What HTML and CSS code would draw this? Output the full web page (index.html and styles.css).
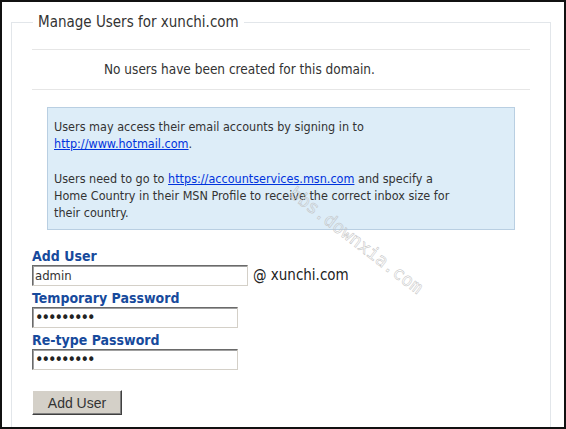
FILE: index.html
```html
<!DOCTYPE html>
<html lang="en">
<head>
  <meta charset="UTF-8" />
  <title>Manage Users</title>
  <link rel="stylesheet" href="styles.css">
</head>
<body>

<div class="page">
  <fieldset class="panel">
    <legend>Manage Users for xunchi.com</legend>

    <div class="status">No users have been created for this domain.</div>

    <div class="info">
      <p>Users may access their email accounts by signing in to<br>
        <a href="#">http://www.hotmail.com</a>.</p>
      <p>Users need to go to <a href="#">https://accountservices.msn.com</a> and specify a<br>
        Home Country in their MSN Profile to receive the correct inbox size for<br>
        their country.</p>
    </div>

    <form class="add-form" onsubmit="return false;">
      <label for="user">Add User</label>
      <div class="row">
        <input type="text" id="user" class="wide" value="admin">
        <span class="domain">@ xunchi.com</span>
      </div>
      <label for="pass1">Temporary Password</label>
      <div class="row">
        <input type="password" id="pass1" value="password1">
      </div>
      <label for="pass2">Re-type Password</label>
      <div class="row">
        <input type="password" id="pass2" value="password1">
      </div>
      <button type="submit">Add User</button>
    </form>
  </fieldset>

  <div class="watermark">bbs.downxia.com</div>
</div>

</body>
</html>
```

FILE: styles.css
```css
body {
  margin: 0;
  font-family: 'DejaVu Sans Condensed', 'DejaVu Sans', sans-serif;
  font-size: 13px;
  color: #333;
  background-color: #fff;
}
.page {
  position: relative;
  box-sizing: border-box;
  width: 566px;
  height: 429px;
  border: 2px solid #111;
  overflow: hidden;
}
.panel {
  margin: 10px 13px 0 9px;
  padding: 0;
  height: 460px;
  border: 1px solid #e2e6ea;
}
.panel legend {
  margin-left: 21px;
  padding: 0 5px;
  font-size: 15px;
  line-height: 20px;
  color: #333;
}
.status {
  margin: 17px 20px 0 20px;
  padding: 11px 0 11px 72px;
  font-size: 13.5px;
  line-height: 17px;
  border-top: 1px solid #e6e6e6;
  border-bottom: 1px solid #e6e6e6;
}
.info {
  margin: 17px 35px 0 35px;
  padding: 10px 10px 8px 6px;
  font-size: 12.5px;
  line-height: 17px;
  background-color: #ddedf8;
  border: 1px solid #b9cfe2;
}
.info p {
  margin: 0;
}
.info p + p {
  margin-top: 18px;
}
.info a {
  color: #0033dd;
}
.add-form {
  margin: 17px 20px 0 20px;
}
.add-form label {
  display: block;
  font-weight: bold;
  font-size: 14px;
  line-height: 18px;
  color: #174a9c;
}
.row {
  display: flex;
  align-items: baseline;
  gap: 5px;
  margin: 0 0 3px 0;
}
.row input {
  box-sizing: border-box;
  width: 206px;
  height: 21px;
  padding: 0 2px;
  font-family: 'DejaVu Sans Condensed', 'DejaVu Sans', sans-serif;
  font-size: 13px;
  color: #333;
  border: 1px solid;
  border-color: #6a6a6a #d4d0c8 #d4d0c8 #6a6a6a;
  box-shadow: inset 1px 1px 0 #a0a0a0;
  outline: none;
}
.row input[type="password"] {
  font-size: 16px;
  letter-spacing: -2px;
  color: #222;
}
.row input.wide {
  width: 216px;
}
.domain {
  font-size: 15px;
  color: #222;
}
button {
  margin-top: 17px;
  width: 90px;
  height: 25px;
  padding: 0;
  font-family: 'Liberation Sans', Arial, sans-serif;
  font-size: 14px;
  color: #333;
  background-color: #d4d0c8;
  border: 1px solid;
  border-color: #fff #404040 #404040 #fff;
  box-shadow: inset -1px -1px 0 #808080;
}
.watermark {
  position: absolute;
  left: 290px;
  top: 178px;
  transform: rotate(37.5deg);
  transform-origin: left center;
  font-family: 'DejaVu Sans Mono', monospace;
  font-size: 18px;
  color: transparent;
  -webkit-text-stroke: 0.5px #c2c2c2;
  pointer-events: none;
}
```
